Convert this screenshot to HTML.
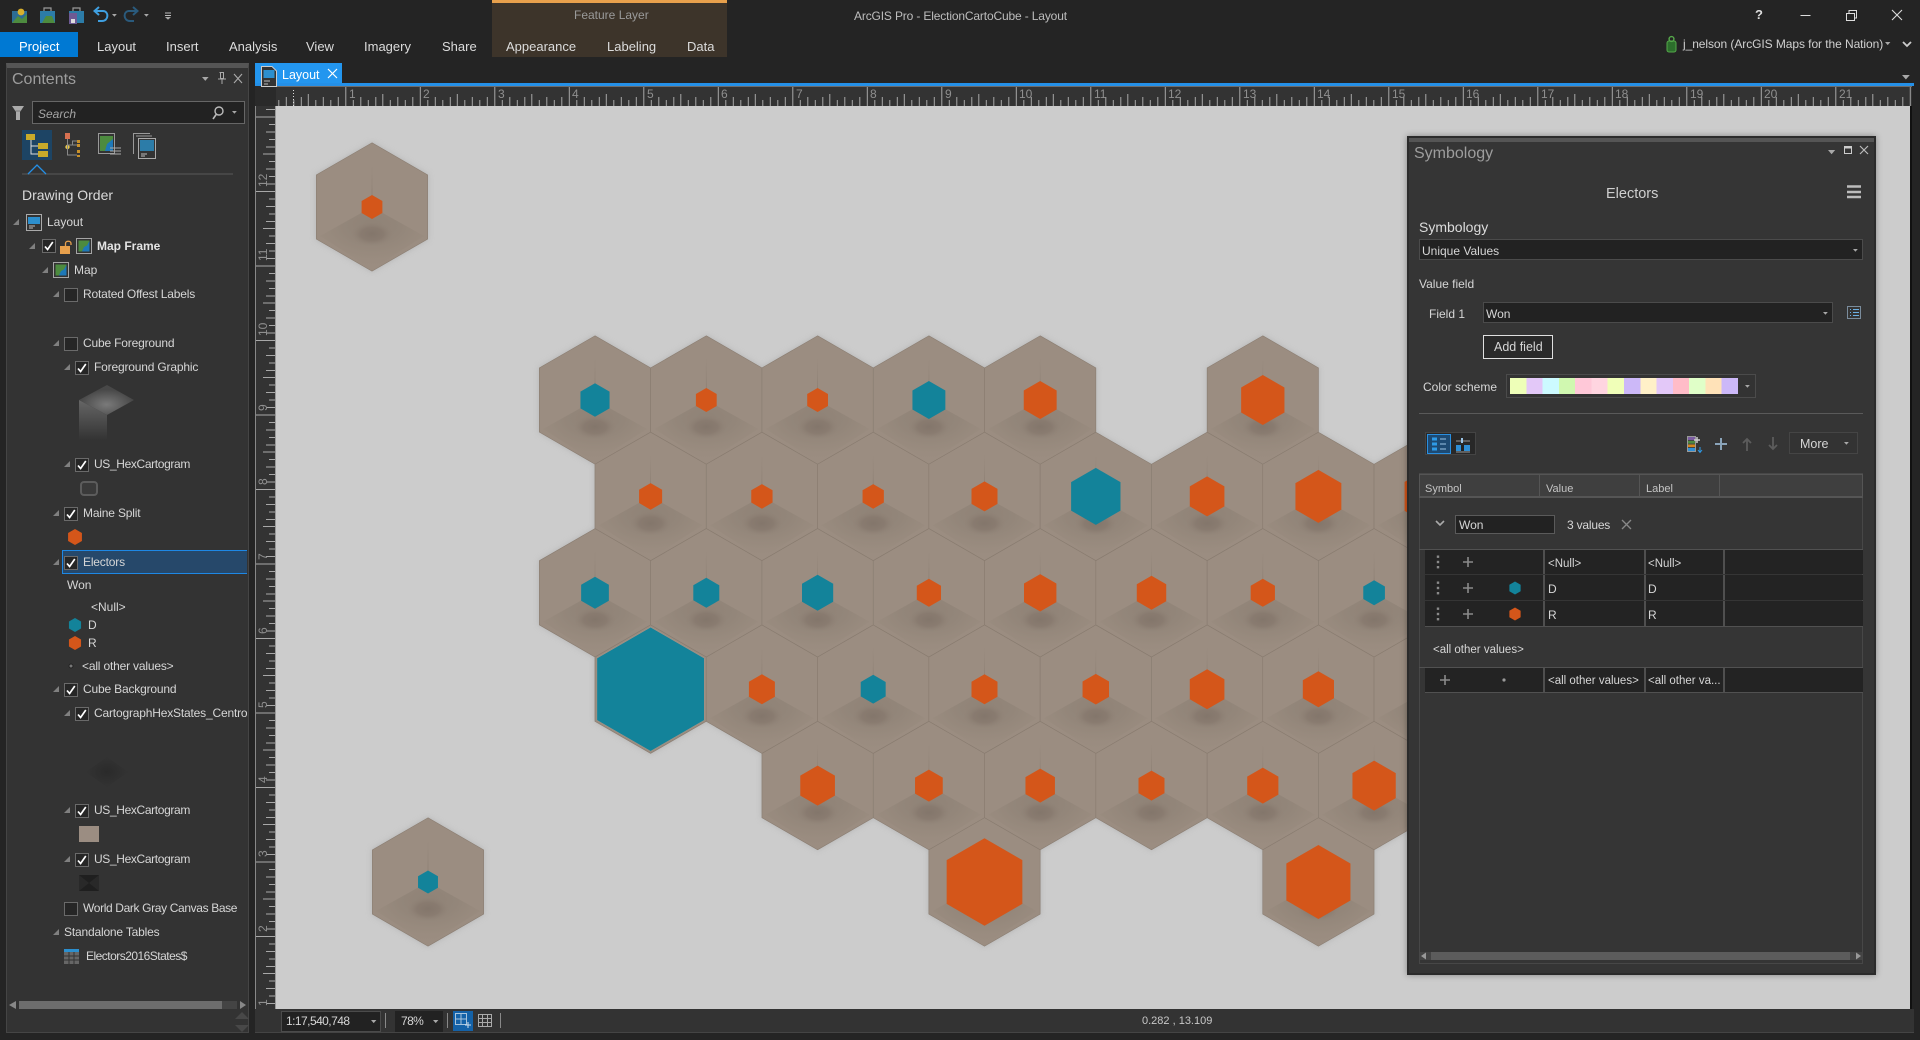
<!DOCTYPE html>
<html lang="en"><head><meta charset="utf-8"><title>ArcGIS Pro - ElectionCartoCube - Layout</title>
<style>
html,body{margin:0;padding:0;width:1920px;height:1040px;overflow:hidden;background:#242424}
body{position:relative;font-family:"Liberation Sans",Arial,sans-serif;font-size:12px;color:#d6d6d6}
.a{position:absolute}
.t{position:absolute;white-space:nowrap;line-height:14px;height:14px}
.n{letter-spacing:-.18px}
.u{letter-spacing:-.36px}
.r{font-size:13px;line-height:16px;height:16px;top:39px;color:#dcdcdc}
svg{position:absolute;left:0;top:0}
.box{position:absolute;box-sizing:border-box;background:#222;border:1px solid #4b4b4b}
.row{position:absolute;left:1425px;width:438px;height:25px;background:#232323}
.sep{position:absolute;top:0;bottom:0;width:2px;background:#4f4f4f}
</style></head><body>

<!-- MAP -->
<svg width="1920" height="1040" viewBox="0 0 1920 1040">
<defs>
<filter id="sh" filterUnits="userSpaceOnUse" x="276" y="106" width="1640" height="910">
<feGaussianBlur in="SourceAlpha" stdDeviation="2.8"/>
<feColorMatrix values="0 0 0 0 .35 0 0 0 0 .35 0 0 0 0 .35 0 0 0 .55 0"/>
</filter>
<radialGradient id="rg" cx=".5" cy=".3" r=".7"><stop offset="0" stop-color="#8f8276"/><stop offset=".4" stop-color="#93867a"/><stop offset=".75" stop-color="#95887b" stop-opacity=".3"/><stop offset="1" stop-color="#9b8d81" stop-opacity="0"/></radialGradient>
<radialGradient id="eg"><stop offset="0" stop-color="#83766b"/><stop offset=".55" stop-color="#86786d" stop-opacity=".75"/><stop offset="1" stop-color="#8f8276" stop-opacity="0"/></radialGradient>
<linearGradient id="lg" x1="0" y1="0" x2="0" y2="1"><stop offset="0" stop-color="#8a7d71" stop-opacity="0"/><stop offset="1" stop-color="#85786c"/></linearGradient>
<clipPath id="mapclip"><rect x="276" y="106" width="1634" height="903"/></clipPath>
<g id="f">
<polygon points="0,-64.2 55.65,-32.1 55.65,32.1 0,64.2 -55.65,32.1 -55.65,-32.1" fill="#9b8d81" stroke="#897c70" stroke-width=".6"/>
<polygon points="0,0 -52,29 0,62 52,29" fill="url(#rg)"/>
<ellipse cx="0" cy="27" rx="21" ry="12" fill="url(#eg)"/>
<rect x="-.4" y="-42" width=".8" height="42" fill="url(#lg)"/>
</g>
<polygon id="m" points="0,-1 .866,-.5 .866,.5 0,1 -.866,.5 -.866,-.5"/>
<g id="faces">
<use href="#f" x="372" y="207"/>
<use href="#f" x="428" y="882"/>
<use href="#f" x="595" y="400"/><use href="#f" x="706.3" y="400"/><use href="#f" x="817.6" y="400"/><use href="#f" x="928.9" y="400"/><use href="#f" x="1040.2" y="400"/><use href="#f" x="1262.8" y="400"/>
<use href="#f" x="650.6" y="496.4"/><use href="#f" x="761.9" y="496.4"/><use href="#f" x="873.2" y="496.4"/><use href="#f" x="984.5" y="496.4"/><use href="#f" x="1095.8" y="496.4"/><use href="#f" x="1207.1" y="496.4"/><use href="#f" x="1318.4" y="496.4"/><use href="#f" x="1429.7" y="496.4"/>
<use href="#f" x="595" y="592.8"/><use href="#f" x="706.3" y="592.8"/><use href="#f" x="817.6" y="592.8"/><use href="#f" x="928.9" y="592.8"/><use href="#f" x="1040.2" y="592.8"/><use href="#f" x="1151.5" y="592.8"/><use href="#f" x="1262.8" y="592.8"/><use href="#f" x="1374.1" y="592.8"/>
<use href="#f" x="650.6" y="689.2"/><use href="#f" x="761.9" y="689.2"/><use href="#f" x="873.2" y="689.2"/><use href="#f" x="984.5" y="689.2"/><use href="#f" x="1095.8" y="689.2"/><use href="#f" x="1207.1" y="689.2"/><use href="#f" x="1318.4" y="689.2"/><use href="#f" x="1429.7" y="689.2"/>
<use href="#f" x="817.6" y="785.6"/><use href="#f" x="928.9" y="785.6"/><use href="#f" x="1040.2" y="785.6"/><use href="#f" x="1151.5" y="785.6"/><use href="#f" x="1262.8" y="785.6"/><use href="#f" x="1374.1" y="785.6"/>
<use href="#f" x="984.5" y="882"/><use href="#f" x="1318.4" y="882"/>
</g>
</defs>
<g clip-path="url(#mapclip)">
<rect x="276" y="106" width="1634" height="903" fill="#cccccc"/>
<use href="#faces" filter="url(#sh)"/>
<use href="#faces"/>
<g fill="#13839a">
<use href="#m" transform="translate(595 400) scale(16.8)"/>
<use href="#m" transform="translate(928.9 400) scale(19)"/>
<use href="#m" transform="translate(1095.8 496.4) scale(28.5)"/>
<use href="#m" transform="translate(595 592.8) scale(16)"/>
<use href="#m" transform="translate(706.3 592.8) scale(15)"/>
<use href="#m" transform="translate(817.6 592.8) scale(18)"/>
<use href="#m" transform="translate(1374.1 592.8) scale(12.5)"/>
<use href="#m" transform="translate(650.6 689.2) scale(62)" stroke="#a4968a" stroke-width=".008"/>
<use href="#m" transform="translate(873.2 689.2) scale(14.4)"/>
<use href="#m" transform="translate(428 882) scale(11.5)"/>
</g>
<g fill="#d4561a">
<use href="#m" transform="translate(372 207) scale(12)"/>
<use href="#m" transform="translate(706.3 400) scale(12)"/>
<use href="#m" transform="translate(817.6 400) scale(12)"/>
<use href="#m" transform="translate(1040.2 400) scale(19)"/>
<use href="#m" transform="translate(1262.8 400) scale(25)"/>
<use href="#m" transform="translate(650.6 496.4) scale(13.3)"/>
<use href="#m" transform="translate(761.9 496.4) scale(12.3)"/>
<use href="#m" transform="translate(873.2 496.4) scale(12.3)"/>
<use href="#m" transform="translate(984.5 496.4) scale(15)"/>
<use href="#m" transform="translate(1207.1 496.4) scale(20)"/>
<use href="#m" transform="translate(1318.4 496.4) scale(26.5)"/>
<use href="#m" transform="translate(1429.7 496.4) scale(29)"/>
<use href="#m" transform="translate(928.9 592.8) scale(14)"/>
<use href="#m" transform="translate(1040.2 592.8) scale(18.7)"/>
<use href="#m" transform="translate(1151.5 592.8) scale(17)"/>
<use href="#m" transform="translate(1262.8 592.8) scale(14)"/>
<use href="#m" transform="translate(761.9 689.2) scale(15)"/>
<use href="#m" transform="translate(984.5 689.2) scale(15)"/>
<use href="#m" transform="translate(1095.8 689.2) scale(15.3)"/>
<use href="#m" transform="translate(1207.1 689.2) scale(20)"/>
<use href="#m" transform="translate(1318.4 689.2) scale(18)"/>
<use href="#m" transform="translate(817.6 785.6) scale(20)"/>
<use href="#m" transform="translate(928.9 785.6) scale(16)"/>
<use href="#m" transform="translate(1040.2 785.6) scale(17)"/>
<use href="#m" transform="translate(1151.5 785.6) scale(15)"/>
<use href="#m" transform="translate(1262.8 785.6) scale(18)"/>
<use href="#m" transform="translate(1374.1 785.6) scale(25)"/>
<use href="#m" transform="translate(984.5 882) scale(43.7)"/>
<use href="#m" transform="translate(1318.4 882) scale(37)"/>
</g>
</g>
</svg>

<!-- Ribbon -->
<div class="a" style="left:492px;top:0;width:235px;height:57px;background:#3d342a;border-top:3px solid #e8a04c;box-sizing:border-box"></div>
<div class="a" style="left:0;top:32px;width:78px;height:25px;background:#0079d3"></div>
<div class="t r" style="left:19px;color:#fff">Project</div>
<div class="t r" style="left:97px">Layout</div>
<div class="t r" style="left:166px">Insert</div>
<div class="t r" style="left:229px">Analysis</div>
<div class="t r" style="left:306px">View</div>
<div class="t r" style="left:364px">Imagery</div>
<div class="t r" style="left:442px">Share</div>
<div class="t r" style="left:506px">Appearance</div>
<div class="t r" style="left:607px">Labeling</div>
<div class="t r" style="left:687px">Data</div>
<div class="t" style="left:574px;top:8px;color:#9a9a9a">Feature Layer</div>
<div class="t" style="left:854px;top:9px;color:#bdbdbd;letter-spacing:-.15px">ArcGIS Pro - ElectionCartoCube - Layout</div>
<div class="t" style="left:1683px;top:37px;color:#d0d0d0;letter-spacing:-.07px">j_nelson (ArcGIS Maps for the Nation)</div>
<div class="t" style="left:1755px;top:8px;font-weight:bold;font-size:13px;color:#ddd">?</div>

<!-- Contents panel -->
<div class="a" style="left:6px;top:63px;width:243px;height:970px;background:#333;box-sizing:border-box;border:1px solid #454545;border-top:5px solid #555"></div>
<div class="t" style="left:12px;top:71px;font-size:16px;line-height:18px;height:18px;color:#9d9d9d">Contents</div>
<div class="box" style="left:32px;top:101px;width:213px;height:23px;border-color:#666"></div>
<div class="t" style="left:38px;top:107px;font-style:italic;color:#a5a5a5">Search</div>
<div class="a" style="left:22px;top:130px;width:30px;height:30px;background:#1d4464"></div>
<div class="a" style="left:22px;top:173px;width:211px;height:2px;background:#464646"></div>
<div class="t" style="left:22px;top:187px;font-size:14px;line-height:16px;height:16px;color:#dadada">Drawing Order</div>
<div class="t" style="left:47px;top:215px">Layout</div>
<div class="t" style="left:97px;top:239px;font-weight:bold;color:#e4e4e4">Map Frame</div>
<div class="t" style="left:74px;top:263px">Map</div>
<div class="t n" style="left:83px;top:287px">Rotated Offest Labels</div>
<div class="t n" style="left:83px;top:336px">Cube Foreground</div>
<div class="t n" style="left:94px;top:360px">Foreground Graphic</div>
<div class="t u" style="left:94px;top:457px">US_HexCartogram</div>
<div class="t n" style="left:83px;top:506px">Maine Split</div>
<div class="a" style="left:62px;top:550px;width:185px;height:24px;box-sizing:border-box;background:#26486a;border:1px solid #1e88e5;border-right:0"></div>
<div class="t n" style="left:83px;top:555px">Electors</div>
<div class="t" style="left:67px;top:578px">Won</div>
<div class="t" style="left:91px;top:600px">&lt;Null&gt;</div>
<div class="t" style="left:88px;top:618px">D</div>
<div class="t" style="left:88px;top:636px">R</div>
<div class="t n" style="left:82px;top:659px">&lt;all other values&gt;</div>
<div class="t n" style="left:83px;top:682px">Cube Background</div>
<div class="t n" style="left:94px;top:706px;width:153px;overflow:hidden">CartographHexStates_Centroid</div>
<div class="t u" style="left:94px;top:803px">US_HexCartogram</div>
<div class="a" style="left:79px;top:826px;width:20px;height:16px;background:#9b8d82"></div>
<div class="t u" style="left:94px;top:852px">US_HexCartogram</div>
<div class="t u" style="left:83px;top:901px">World Dark Gray Canvas Base</div>
<div class="t n" style="left:64px;top:925px">Standalone Tables</div>
<div class="t" style="left:86px;top:949px;letter-spacing:-.52px">Electors2016States$</div>
<div class="a" style="left:19px;top:1001px;width:218px;height:8px;background:#444"></div>
<div class="a" style="left:19px;top:1001px;width:203px;height:8px;background:#6d6d6d"></div>

<!-- Doc tab + rulers -->
<div class="a" style="left:255px;top:63px;width:87px;height:20px;background:#2396ef"></div>
<div class="t" style="left:282px;top:68px;font-size:12.5px;color:#fff">Layout</div>
<div class="a" style="left:255px;top:83px;width:1659px;height:3px;background:#2490e8"></div>
<div class="a" style="left:255px;top:86px;width:21px;height:20px;background:#2a2a2a"></div>
<div class="a" style="left:255px;top:1009px;width:1659px;height:24px;background:#333;border-bottom:1px solid #444;box-sizing:border-box"></div>
<svg width="1920" height="1040" viewBox="0 0 1920 1040">
<defs>
<pattern id="rt" patternUnits="userSpaceOnUse" x="345.3" y="87" width="74.5" height="19">
<rect width="74.5" height="19" fill="#333"/>
<g stroke="#a8a8a8" stroke-width="1" shape-rendering="crispEdges">
<path d="M.5 0V19M8 13V19M15.4 10V19M22.9 13V19M30.3 10V19M37.7 7V19M45.2 13V19M52.6 10V19M60.1 13V19M67.5 10V19"/></g>
</pattern>
<pattern id="rl" patternUnits="userSpaceOnUse" x="256" y="191" width="19" height="74.5">
<rect width="19" height="74.5" fill="#333"/>
<g stroke="#a8a8a8" stroke-width="1" shape-rendering="crispEdges">
<path d="M0 .5H19M13 8H19M10 15.4H19M13 22.9H19M10 30.3H19M7 37.7H19M13 45.2H19M10 52.6H19M13 60.1H19M10 67.5H19"/></g>
</pattern>
</defs>
<rect x="276" y="87" width="1636" height="19" fill="url(#rt)"/>
<rect x="276" y="86" width="1636" height="1" fill="#6d6d6d"/>
<rect x="1910" y="87" width="1" height="19" fill="#888"/>
<path d="M293.5 90V106" stroke="#ddd" stroke-dasharray="1 2"/>
<rect x="256" y="106" width="19" height="903" fill="url(#rl)"/>
<rect x="255" y="106" width="1" height="903" fill="#888"/>
<rect x="275" y="106" width="1" height="903" fill="#999"/>
<g font-family="'Liberation Sans',Arial,sans-serif" font-size="12" fill="#8f8f8f">
<text x="349" y="98">1</text><text x="423" y="98">2</text><text x="498" y="98">3</text><text x="572" y="98">4</text><text x="647" y="98">5</text><text x="721" y="98">6</text><text x="796" y="98">7</text><text x="870" y="98">8</text><text x="945" y="98">9</text><text x="1019" y="98">10</text><text x="1094" y="98">11</text><text x="1168" y="98">12</text><text x="1243" y="98">13</text><text x="1317" y="98">14</text><text x="1392" y="98">15</text><text x="1466" y="98">16</text><text x="1541" y="98">17</text><text x="1615" y="98">18</text><text x="1690" y="98">19</text><text x="1764" y="98">20</text><text x="1839" y="98">21</text>
<text transform="translate(267 187) rotate(-90)">12</text><text transform="translate(267 261) rotate(-90)">11</text><text transform="translate(267 336) rotate(-90)">10</text><text transform="translate(267 411) rotate(-90)">9</text><text transform="translate(267 485) rotate(-90)">8</text><text transform="translate(267 560) rotate(-90)">7</text><text transform="translate(267 634) rotate(-90)">6</text><text transform="translate(267 708) rotate(-90)">5</text><text transform="translate(267 783) rotate(-90)">4</text><text transform="translate(267 857) rotate(-90)">3</text><text transform="translate(267 932) rotate(-90)">2</text><text transform="translate(267 1006) rotate(-90)">1</text>
</g>
<rect x="1910" y="106" width="2" height="903" fill="#111"/>
</svg>

<!-- Status bar -->
<div class="box" style="left:281px;top:1011px;width:100px;height:21px"></div>
<div class="t" style="left:286px;top:1014px;letter-spacing:-.55px">1:17,540,748</div>
<div class="a" style="left:385px;top:1013px;width:1px;height:15px;background:#888"></div>
<div class="box" style="left:395px;top:1011px;width:48px;height:21px;border-color:#222"></div>
<div class="t" style="left:401px;top:1014px;letter-spacing:-.6px">78%</div>
<div class="a" style="left:447px;top:1013px;width:1px;height:15px;background:#888"></div>
<div class="a" style="left:453px;top:1011px;width:20px;height:20px;background:#1462a8"></div>
<div class="a" style="left:500px;top:1013px;width:1px;height:15px;background:#888"></div>
<div class="t" style="left:1142px;top:1014px;color:#c8c8c8;font-size:11px">0.282 , 13.109</div>

<!-- Symbology panel -->
<div class="a" style="left:1407px;top:136px;width:469px;height:839px;background:#353535;box-sizing:border-box;border:2px solid #2b2b2b;box-shadow:0 0 6px rgba(0,0,0,.35)"></div>
<div class="a" style="left:1409px;top:138px;width:465px;height:4px;background:#555"></div>
<div class="t" style="left:1414px;top:145px;font-size:16px;line-height:18px;height:18px;color:#9d9d9d">Symbology</div>
<div class="t" style="left:1606px;top:186px;font-size:14.5px;line-height:16px;height:16px;color:#cfcfcf">Electors</div>
<div class="t" style="left:1419px;top:219px;font-size:14px;line-height:16px;height:16px;color:#dcdcdc">Symbology</div>
<div class="box" style="left:1419px;top:239px;width:444px;height:21px"></div>
<div class="t" style="left:1422px;top:244px">Unique Values</div>
<div class="t" style="left:1419px;top:277px">Value field</div>
<div class="t" style="left:1429px;top:307px">Field 1</div>
<div class="box" style="left:1483px;top:302px;width:350px;height:21px"></div>
<div class="t" style="left:1486px;top:307px">Won</div>
<div class="box" style="left:1483px;top:335px;width:70px;height:24px;border-color:#e0e0e0;background:#2a2a2a"></div>
<div class="t" style="left:1494px;top:340px;font-size:12.5px">Add field</div>
<div class="t" style="left:1423px;top:380px">Color scheme</div>
<div class="box" style="left:1506px;top:374px;width:250px;height:24px;background:#333"></div>
<div class="a" style="left:1510px;top:378px;width:228px;height:16px;background:linear-gradient(90deg,#eeffb8 0 7.14%,#e3c8f8 7.14% 14.28%,#ccfaff 14.28% 21.42%,#d0f8b0 21.42% 28.57%,#ffc8d8 28.57% 35.71%,#ffd5e0 35.71% 42.85%,#f0ffb8 42.85% 50%,#ccb8f8 50% 57.14%,#fff0c8 57.14% 64.28%,#e3c8f8 64.28% 71.42%,#ffbcc8 71.42% 78.57%,#e0ffc8 78.57% 85.71%,#ffe2b8 85.71% 92.85%,#ccb8f8 92.85% 100%)"></div>
<div class="a" style="left:1419px;top:413px;width:444px;height:1px;background:#5a5a5a"></div>
<div class="box" style="left:1425px;top:432px;width:51px;height:23px;background:#282828;border-color:#444"></div>
<div class="a" style="left:1427px;top:434px;width:24px;height:20px;box-sizing:border-box;background:#1d4a73;border:1px solid #2a8fe0"></div>
<div class="box" style="left:1789px;top:432px;width:69px;height:22px;background:#333;border-color:#454545"></div>
<div class="t" style="left:1800px;top:437px;font-size:12.5px">More</div>

<!-- Table -->
<div class="a" style="left:1419px;top:473px;width:444px;height:491px;box-sizing:border-box;border:1px solid #474747;background:#353535"></div>
<div class="a" style="left:1419px;top:474px;width:444px;height:24px;background:#3f3f3f;box-sizing:border-box;border:1px solid #555;border-bottom:2px solid #555"></div>
<div class="a" style="left:1539px;top:474px;width:1px;height:24px;background:#555"></div>
<div class="a" style="left:1639px;top:474px;width:1px;height:24px;background:#555"></div>
<div class="a" style="left:1719px;top:474px;width:1px;height:24px;background:#555"></div>
<div class="t" style="left:1425px;top:482px;font-size:11px;color:#c4c4c4">Symbol</div>
<div class="t" style="left:1546px;top:482px;font-size:11px;color:#c4c4c4">Value</div>
<div class="t" style="left:1646px;top:482px;font-size:11px;color:#c4c4c4">Label</div>
<div class="box" style="left:1455px;top:515px;width:100px;height:19px;background:#222;border-color:#5a5a5a"></div>
<div class="t" style="left:1459px;top:518px">Won</div>
<div class="t" style="left:1567px;top:518px;letter-spacing:-.2px">3 values</div>
<div class="row" style="top:549px"><div class="sep" style="left:118px"></div><div class="sep" style="left:219px"></div><div class="sep" style="left:298px"></div></div>
<div class="row" style="top:575px"><div class="sep" style="left:118px"></div><div class="sep" style="left:219px"></div><div class="sep" style="left:298px"></div></div>
<div class="row" style="top:601px"><div class="sep" style="left:118px"></div><div class="sep" style="left:219px"></div><div class="sep" style="left:298px"></div></div>
<div class="row" style="top:667px"><div class="sep" style="left:118px"></div><div class="sep" style="left:219px"></div><div class="sep" style="left:298px"></div></div>
<div class="a" style="left:1419px;top:549px;width:444px;height:1px;background:#515151"></div>
<div class="a" style="left:1425px;top:626px;width:438px;height:1px;background:#515151"></div>
<div class="a" style="left:1419px;top:667px;width:444px;height:1px;background:#515151"></div>
<div class="a" style="left:1425px;top:692px;width:438px;height:1px;background:#515151"></div>
<div class="t" style="left:1548px;top:557px;font-size:11.5px">&lt;Null&gt;</div>
<div class="t" style="left:1648px;top:557px;font-size:11.5px">&lt;Null&gt;</div>
<div class="t" style="left:1548px;top:582px">D</div>
<div class="t" style="left:1648px;top:582px">D</div>
<div class="t" style="left:1548px;top:608px">R</div>
<div class="t" style="left:1648px;top:608px">R</div>
<div class="t" style="left:1433px;top:643px;font-size:11.5px">&lt;all other values&gt;</div>
<div class="t" style="left:1548px;top:674px;font-size:11.5px">&lt;all other values&gt;</div>
<div class="t" style="left:1648px;top:674px;font-size:11.5px">&lt;all other va...</div>
<div class="a" style="left:1420px;top:952px;width:442px;height:8px;background:#444"></div>
<div class="a" style="left:1431px;top:952px;width:419px;height:8px;background:#5c5c5c"></div>

<!-- Icons overlay -->
<svg width="1920" height="1040" viewBox="0 0 1920 1040">
<defs>
<g id="cb"><rect x=".5" y=".5" width="13" height="13" fill="#262626" stroke="#6a6a6a"/><path d="M3 7.5L5.6 10.5L10.8 3" fill="none" stroke="#fff" stroke-width="1.7"/></g>
<g id="cbe"><rect x=".5" y=".5" width="13" height="13" fill="#262626" stroke="#6a6a6a"/></g>
<polygon id="ar" points="0,6 6,6 6,0" fill="#808080"/>
<g id="mp"><rect x=".5" y=".5" width="15" height="15" fill="#333" stroke="#a5a5a5"/><rect x="2.5" y="2.5" width="11" height="11" fill="#4d8b3f"/><path d="M6 13.5L8 9L11 7.5L13.5 3V13.5Z" fill="#1e78b8"/></g>
<polygon id="car" points="0,0 6,0 3,3.5" fill="#a8a8a8"/>
<g id="plus"><path d="M-5 0H5M0-5V5" stroke="#8a8a8a" stroke-width="1.6" fill="none"/></g>
<g id="dots" fill="#8a8a8a"><rect x="-1.2" y="-6.5" width="2.4" height="2.4"/><rect x="-1.2" y="-1.2" width="2.4" height="2.4"/><rect x="-1.2" y="4" width="2.4" height="2.4"/></g>
<linearGradient id="cl" x1="0" y1="0" x2="0" y2="1"><stop offset="0" stop-color="#666"/><stop offset="1" stop-color="#333"/></linearGradient>
<radialGradient id="ct" cx=".5" cy=".65"><stop offset="0" stop-color="#7a7a7a"/><stop offset="1" stop-color="#484848"/></radialGradient>
<radialGradient id="dc"><stop offset="0" stop-color="#2a2a2a"/><stop offset="1" stop-color="#333"/></radialGradient>
</defs>

<!-- QAT -->
<g transform="translate(12 8)"><rect x="0" y="3" width="15" height="12" fill="#2c6c94"/><path d="M0 15L6 8L10 11L15 6V15Z" fill="#4d8b3f"/><circle cx="9" cy="4" r="3.4" fill="#d8b02c"/></g>
<g transform="translate(40 8)"><path d="M4 3V0H11V3" fill="none" stroke="#9a9a9a" stroke-width="1.2"/><rect x="0" y="3" width="15" height="12" fill="#2c7ca8"/><path d="M2 15L6 8L12 8L15 15Z" fill="#4d8b3f"/></g>
<g transform="translate(69 8)"><path d="M4 3V0H11V3" fill="none" stroke="#9a9a9a" stroke-width="1.2"/><rect x="0" y="3" width="15" height="12" fill="#2c7ca8"/><rect x="0" y="5" width="8" height="11" fill="#6e5a94"/><rect x="2" y="11" width="4" height="4" fill="#ddd"/></g>
<path d="M96 11H103C109 11 109 21 102 21H98M99 7L94.5 11L99 15" fill="none" stroke="#3f9fe0" stroke-width="2"/>
<use href="#car" transform="translate(112 14) scale(.8)"/>
<path d="M136 11H129C123 11 123 21 130 21H134M133 7L137.5 11L133 15" fill="none" stroke="#2a5a7c" stroke-width="2"/>
<use href="#car" transform="translate(144 14) scale(.8)"/>
<path d="M165 13H171M165 15.5H171" stroke="#bbb"/><use href="#car" transform="translate(165 17) scale(1 .8)"/>

<!-- Window controls -->
<path d="M1800.5 15.5H1810.5" stroke="#ddd"/>
<path d="M1846.5 13.5H1854.5V20.5H1846.5ZM1849 13V10.5H1856.5V18H1855" fill="none" stroke="#ddd"/>
<path d="M1892 10L1902 20M1902 10L1892 20" stroke="#ddd" fill="none" stroke-width="1.1"/>
<rect x="1667" y="41" width="9" height="11" rx="2" fill="#2c6e2c" stroke="#55a84a"/><circle cx="1671.5" cy="39" r="2.4" fill="none" stroke="#55a84a" stroke-width="1.4"/>
<use href="#car" transform="translate(1885 42) scale(.9)"/>
<path d="M1903 42L1907 46L1911 42" fill="none" stroke="#ccc" stroke-width="1.8"/>
<use href="#car" transform="translate(1902 75) scale(1.3)"/>

<!-- Contents header -->
<use href="#car" transform="translate(202 77) scale(1.1)" />
<path d="M219.5 72.5H224M220.5 73V78.5H223.5V73M218 79H226M222 79V84" fill="none" stroke="#aaa"/>
<path d="M234 74L242 83M242 74L234 83" stroke="#aaa" fill="none" stroke-width="1.1"/>
<path d="M12 106H24L20 112V120H16V112Z" fill="#aaa"/><path d="M15.5 111H20.5" stroke="#777"/>
<circle cx="219" cy="111" r="4" fill="none" stroke="#bbb" stroke-width="1.4"/><path d="M216.5 114L213 119" stroke="#bbb" stroke-width="1.6"/>
<use href="#car" transform="translate(232 111) scale(.8)"/>

<!-- Contents view icons -->
<g fill="#c8aa2a"><rect x="26" y="134" width="9" height="6"/><rect x="38" y="143" width="10" height="6"/><rect x="38" y="151" width="10" height="6"/></g>
<path d="M31 140V154H38M31 146H38" stroke="#ddd" fill="none"/>
<rect x="65" y="133" width="5" height="6" fill="#d87050"/><circle cx="67.5" cy="147" r="2.2" fill="#e8c84a"/>
<path d="M67.5 139V155H77M67.5 145H77M72.5 145V141H77" stroke="#888" fill="none"/>
<g fill="#c8902a"><rect x="77" y="140" width="3" height="3"/><rect x="77" y="144" width="3" height="3"/><rect x="77" y="150" width="3" height="3"/><rect x="77" y="155" width="3" height="2"/></g>
<rect x="98.5" y="133.5" width="16" height="20" fill="#333" stroke="#999"/><rect x="100" y="136" width="13" height="15" fill="#4d8b3f"/><path d="M105 151L107 144L113 139V151Z" fill="#1e78b8"/>
<path d="M110 148H121M110 151H121M110 154H121" stroke="#aaa"/>
<path d="M133.5 154V133.5H150M136 136H152" stroke="#999" fill="none"/><rect x="138.5" y="138.5" width="17" height="20" fill="#333" stroke="#aaa"/><rect x="140" y="140" width="14" height="11" fill="#2c7ca8"/><path d="M141 154H147M141 156H145" stroke="#bbb"/>
<path d="M28 174L37 165L46 174" stroke="#2490e8" fill="none" stroke-width="1.3"/>

<!-- Tree -->
<use href="#ar" x="13" y="219"/>
<g transform="translate(26 214)"><rect x=".5" y=".5" width="15" height="16" fill="#333" stroke="#aaa"/><rect x="2" y="3" width="12" height="7" fill="#2c8fce"/><path d="M3 12H9M3 14H7" stroke="#bbb"/></g>
<use href="#ar" x="29" y="243"/><use href="#cb" x="42" y="239"/>
<g transform="translate(60 241)"><rect x="0" y="5" width="10" height="8" fill="#e8a04c"/><path d="M5.5 5V2.5C5.5-.5 11-.5 11 2.5V4" fill="none" stroke="#e8a04c" stroke-width="1.3"/></g>
<use href="#mp" x="76" y="238"/>
<use href="#ar" x="42" y="267"/><use href="#mp" x="53" y="262"/>
<use href="#ar" x="53" y="291"/><use href="#cbe" x="64" y="288"/>
<use href="#ar" x="53" y="340"/><use href="#cbe" x="64" y="337"/>
<use href="#ar" x="64" y="364"/><use href="#cb" x="75" y="361"/>
<polygon points="107,385 134,400 107,415 79,400" fill="url(#ct)"/>
<polygon points="79,400 107,415 107,440 79,440" fill="url(#cl)"/>
<use href="#ar" x="64" y="461"/><use href="#cb" x="75" y="458"/>
<rect x="81" y="482" width="16" height="13" rx="3" fill="#3a3a3a" stroke="#5c5c5c" stroke-width="2"/>
<use href="#ar" x="53" y="510"/><use href="#cb" x="64" y="507"/>
<use href="#m" transform="translate(75 537) scale(8)" fill="#d4561a"/>
<use href="#ar" x="53" y="559"/><use href="#cb" x="64" y="556"/>
<use href="#m" transform="translate(75 625) scale(7)" fill="#13839a"/>
<use href="#m" transform="translate(75 643) scale(7)" fill="#d4561a"/>
<circle cx="71" cy="666" r="2" fill="#777" stroke="#222"/>
<use href="#ar" x="53" y="686"/><use href="#cb" x="64" y="683"/>
<use href="#ar" x="64" y="710"/><use href="#cb" x="75" y="707"/>
<polygon points="107,757 128,772 107,787 86,772" fill="url(#dc)"/>
<use href="#ar" x="64" y="807"/><use href="#cb" x="75" y="804"/>
<use href="#ar" x="64" y="856"/><use href="#cb" x="75" y="853"/>
<rect x="79" y="875" width="20" height="16" fill="#1f1f1f"/><path d="M79 875L89 883L79 891ZM99 875L89 883L99 891Z" fill="#292929"/>
<use href="#cbe" x="64" y="902"/>
<use href="#ar" x="53" y="929"/>
<rect x="64" y="949" width="15" height="15" fill="#666"/><rect x="64" y="949" width="15" height="3" fill="#2c8fce"/><path d="M64 956H79M64 960H79M69 952V964M74 952V964" stroke="#333"/>
<polygon points="9,1005 16,1001 16,1009" fill="#888"/><polygon points="246,1005 240,1001 240,1009" fill="#888"/>
<polygon points="242,1012 249,1019 235,1019" fill="#484848"/><polygon points="242,1032 249,1025 235,1025" fill="#484848"/>

<!-- Doc tab icon + close -->
<g transform="translate(261 66)"><path d="M.5.5H11L15.5 5V20.5H.5Z" fill="#333" stroke="#ccc"/><rect x="2.5" y="4" width="11" height="8" fill="#2c8fce"/><path d="M3 15H9M3 18H7" stroke="#bbb"/></g>
<path d="M328 69L337 78M337 69L328 78" stroke="#fff" fill="none" stroke-width="1.2"/>

<!-- Status icons -->
<use href="#car" transform="translate(371 1020) scale(.9)"/><use href="#car" transform="translate(433 1020) scale(.9)"/>
<path d="M455.5 1013.5H466.5V1024.5H455.5ZM461 1013.5V1024.5M455.5 1019H466.5" fill="none" stroke="#a8c4dd"/>
<path d="M468 1022V1028M465 1025H471" stroke="#cfe0ee"/>
<path d="M478.5 1014.5H491.5V1026.5H478.5ZM478.5 1018.5H491.5M478.5 1022.5H491.5M482.5 1014.5V1026.5M487.5 1014.5V1026.5" fill="none" stroke="#aaa"/>

<!-- Symbology icons -->
<use href="#car" transform="translate(1828 150) scale(1.2)"/>
<rect x="1844.5" y="146.5" width="7" height="7" fill="none" stroke="#ccc"/><rect x="1844.5" y="146.5" width="7" height="2" fill="#ccc"/>
<path d="M1860 146L1868 154M1868 146L1860 154" stroke="#bbb" fill="none" stroke-width="1.2"/>
<path d="M1847 186.5H1861M1847 192H1861M1847 197H1861" stroke="#bcbcbc" stroke-width="2.6"/>
<use href="#car" transform="translate(1853 249) scale(.8)"/>
<use href="#car" transform="translate(1823 312) scale(.8)"/>
<rect x="1847.5" y="306.5" width="13" height="12" fill="none" stroke="#7a8c9c"/><path d="M1850 309.5H1851M1850 312.5H1851M1850 315.5H1851M1853 309.5H1859M1853 312.5H1859M1853 315.5H1859" stroke="#6cb0e4"/>
<use href="#car" transform="translate(1745 385) scale(.8)"/>
<path d="M1432 439H1437M1432 444H1437M1432 449H1437" stroke="#2e9be8" stroke-width="3"/><path d="M1440 439H1446M1440 444H1446M1440 449H1446" stroke="#9ac4e6"/>
<path d="M1456 441H1470M1456 452H1470" stroke="#999"/><rect x="1456" y="445" width="14" height="6" fill="#222"/><rect x="1456" y="445" width="5" height="6" fill="#2e8fd6"/><rect x="1464" y="445" width="6" height="6" fill="#2e8fd6"/><rect x="1461" y="438" width="2" height="5" fill="#9ac4e6"/>
<g><rect x="1687.5" y="436.5" width="8" height="15" fill="#444" stroke="#999"/><rect x="1688" y="437" width="7" height="3" fill="#7a5ca0"/><rect x="1688" y="441" width="7" height="2.5" fill="#4d8b3f"/><rect x="1688" y="444.5" width="7" height="2.5" fill="#d4861a"/><rect x="1688" y="448" width="7" height="3" fill="#2e8fd6"/><path d="M1697 437V443M1694 440H1700" stroke="#ccc" stroke-width="1.5"/><path d="M1700 447V452M1698 450L1700 452.5L1702 450" stroke="#2e9be8" fill="none"/></g>
<path d="M1721 438V450M1715 444H1727" stroke="#8aa4ba" stroke-width="2"/>
<path d="M1747 451V439M1743 443L1747 439L1751 443" stroke="#5c5c5c" stroke-width="1.8" fill="none"/>
<path d="M1773 437V449M1769 445L1773 449L1777 445" stroke="#5c5c5c" stroke-width="1.8" fill="none"/>
<use href="#car" transform="translate(1844 442) scale(.8)"/>
<path d="M1436 521L1440 525L1444 521" fill="none" stroke="#aaa" stroke-width="1.6"/>
<path d="M1622 520L1631 529M1631 520L1622 529" stroke="#888" stroke-width="1.3" fill="none"/>
<use href="#dots" x="1438" y="562"/><use href="#plus" x="1468" y="562"/>
<use href="#dots" x="1438" y="588"/><use href="#plus" x="1468" y="588"/>
<use href="#dots" x="1438" y="614"/><use href="#plus" x="1468" y="614"/>
<use href="#m" transform="translate(1515 588) scale(6.5)" fill="#13839a"/>
<use href="#m" transform="translate(1515 614) scale(6.5)" fill="#d4561a"/>
<use href="#plus" x="1445" y="680"/><circle cx="1504" cy="680" r="1.6" fill="#999"/>
<polygon points="1421,956 1426,952.5 1426,959.5" fill="#999"/><polygon points="1861,956 1856,952.5 1856,959.5" fill="#999"/>
</svg>
</body></html>
